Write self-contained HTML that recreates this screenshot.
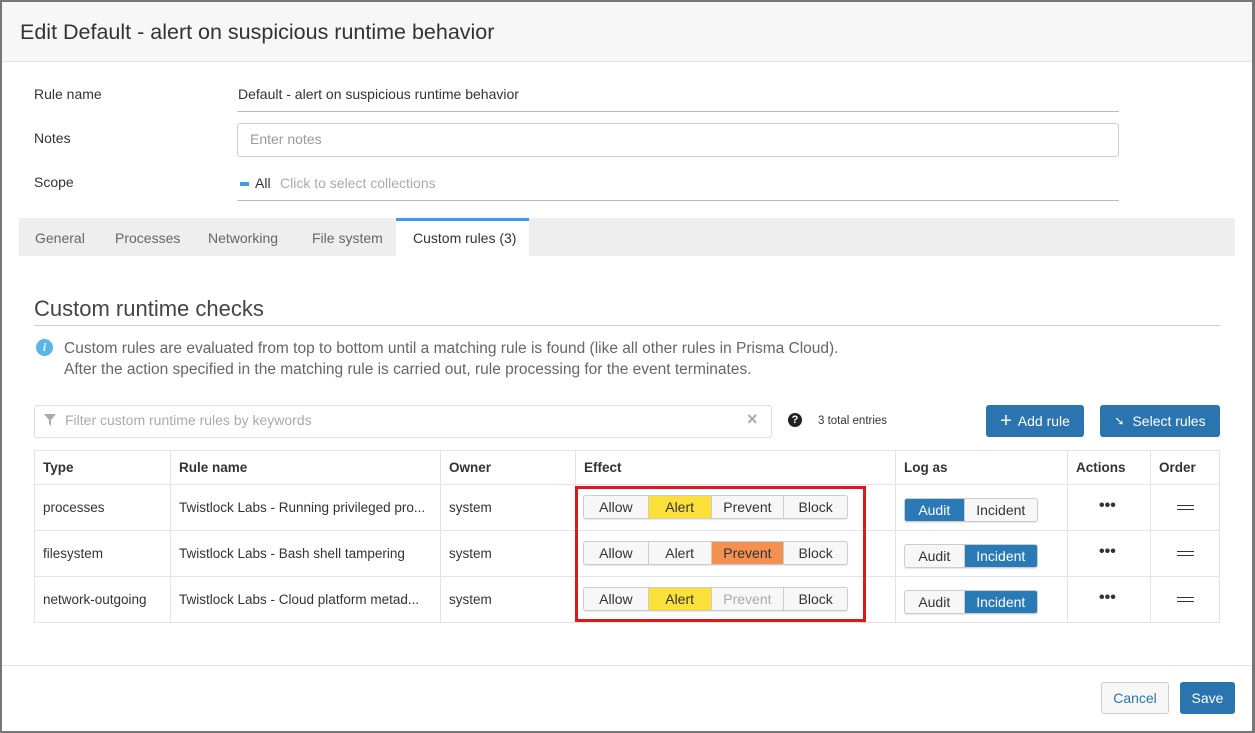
<!DOCTYPE html><html><head><style>
*{box-sizing:border-box;margin:0;padding:0}
body{width:1255px;height:733px;overflow:hidden;background:#fff;font-family:"Liberation Sans",sans-serif;color:#333;position:relative}
.a{position:absolute}
.dlg{left:0;top:0;width:1255px;height:733px;border:2px solid #777;border-right-width:3px}
.lbl{font-size:14px;color:#333}
.seg{position:absolute;display:flex;height:24px;border:1px solid #ccc;border-radius:3px;overflow:hidden;font-size:14px;background:#f7f7f7;box-shadow:0 1px 1px rgba(0,0,0,.1)}
.seg div{display:flex;align-items:center;justify-content:center;border-right:1px solid #ccc;color:#333}
.seg div:last-child{border-right:none}
.y{background:#fce03a}.o{background:#f49150}.b{background:#2a7ab8;color:#fff!important}
.dis{color:#aaa!important}
.btn{position:absolute;background:#2a74b0;color:#fff;font-size:14px;border-radius:3px;display:flex;align-items:center;justify-content:center}
td,th{border:1px solid #e3e3e3;font-size:13.5px;text-align:left;padding:0 8px;color:#333;white-space:nowrap;overflow:hidden}
th{height:34px;font-weight:bold;font-size:13.5px}
td{height:46px}
</style></head><body>
<div class="a dlg"></div>
<div class="a" style="left:2px;top:2px;width:1250px;height:60px;background:#f7f7f7;border-bottom:1px solid #e3e3e3"></div>
<div class="a" style="left:20px;top:20px;font-size:21.5px;color:#333">Edit Default - alert on suspicious runtime behavior</div>
<div class="a lbl" style="left:34px;top:86px">Rule name</div>
<div class="a lbl" style="left:238px;top:86px">Default - alert on suspicious runtime behavior</div>
<div class="a" style="left:237px;top:111px;width:882px;height:1px;background:#bbb"></div>
<div class="a lbl" style="left:34px;top:130px">Notes</div>
<div class="a" style="left:237px;top:123px;width:882px;height:34px;border:1px solid #ccc;border-radius:3px"></div>
<div class="a" style="left:250px;top:131px;font-size:14px;color:#999">Enter notes</div>
<div class="a lbl" style="left:34px;top:174px">Scope</div>
<div class="a" style="left:240px;top:182px;width:9px;height:4px;background:#3a9be8"></div>
<div class="a lbl" style="left:255px;top:175px">All</div>
<div class="a" style="left:280px;top:175px;font-size:14px;color:#aaa">Click to select collections</div>
<div class="a" style="left:237px;top:200px;width:882px;height:1px;background:#bbb"></div>
<div class="a" style="left:19px;top:218px;width:1216px;height:38px;background:#eee"></div>
<div class="a" style="left:396px;top:218px;width:133px;height:38px;background:#fff;border-top:3px solid #3a9be8"></div>
<div class="a" style="left:35px;top:230px;font-size:14px;color:#666">General</div>
<div class="a" style="left:115px;top:230px;font-size:14px;color:#666">Processes</div>
<div class="a" style="left:208px;top:230px;font-size:14px;color:#666">Networking</div>
<div class="a" style="left:312px;top:230px;font-size:14px;color:#666">File system</div>
<div class="a" style="left:413px;top:230px;font-size:14px;color:#333">Custom rules (3)</div>
<div class="a" style="left:34px;top:296px;font-size:22px;color:#444;font-weight:300">Custom runtime checks</div>
<div class="a" style="left:34px;top:325px;width:1186px;height:1px;background:#ccc"></div>
<div class="a" style="left:36px;top:339px;width:17px;height:17px;border-radius:50%;background:#5bb6e8;color:#fff;font:italic bold 12px 'Liberation Serif',serif;text-align:center;line-height:17px">i</div>
<div class="a" style="left:64px;top:338px;font-size:15.5px;color:#666;line-height:21px;white-space:nowrap">Custom rules are evaluated from top to bottom until a matching rule is found (like all other rules in Prisma Cloud).<br>After the action specified in the matching rule is carried out, rule processing for the event terminates.</div>
<div class="a" style="left:34px;top:405px;width:738px;height:33px;border:1px solid #ddd;border-radius:3px"></div>
<svg class="a" style="left:44px;top:414px" width="12" height="12" viewBox="0 0 12 12"><path d="M0 0H12L7 6V12L5 10V6Z" fill="#aaa"/></svg>
<div class="a" style="left:65px;top:412px;font-size:14px;color:#aaa">Filter custom runtime rules by keywords</div>
<div class="a" style="left:747px;top:409px;font-size:18px;color:#aaa;font-weight:bold">×</div>
<div class="a" style="left:788px;top:413px;width:14px;height:14px;border-radius:50%;background:#222;color:#fff;font-size:11px;font-weight:bold;text-align:center;line-height:14px">?</div>
<div class="a" style="left:818px;top:415px;font-size:11.5px;color:#333">3 total entries</div>
<div class="btn" style="left:986px;top:405px;width:98px;height:32px"><span style="font-size:20px;margin-right:6px;font-weight:300">+</span>Add rule</div>
<div class="btn" style="left:1100px;top:405px;width:120px;height:32px"><span style="font-size:12px;margin-right:8px">➘</span>Select rules</div>
<table class="a" style="left:34px;top:450px;width:1186px;border-collapse:collapse;table-layout:fixed">
<tr><th style="width:136px">Type</th><th style="width:270px">Rule name</th><th style="width:135px">Owner</th><th style="width:320px">Effect</th><th style="width:172px">Log as</th><th style="width:83px">Actions</th><th>Order</th></tr>
<tr><td>processes</td><td>Twistlock Labs - Running privileged pro...</td><td>system</td><td></td><td></td><td></td><td></td></tr>
<tr><td>filesystem</td><td>Twistlock Labs - Bash shell tampering</td><td>system</td><td></td><td></td><td></td><td></td></tr>
<tr><td>network-outgoing</td><td>Twistlock Labs - Cloud platform metad...</td><td>system</td><td></td><td></td><td></td><td></td></tr>
</table>
<div class="a" style="left:575px;top:486px;width:291px;height:136px;border:3px solid #e0161e"></div>
<div class="seg" style="left:583px;top:495px;width:265px"><div style="width:65px">Allow</div><div class="y" style="width:63px">Alert</div><div style="width:73px">Prevent</div><div style="width:63px">Block</div></div>
<div class="seg" style="left:583px;top:541px;width:265px"><div style="width:65px">Allow</div><div style="width:63px">Alert</div><div class="o" style="width:73px">Prevent</div><div style="width:63px">Block</div></div>
<div class="seg" style="left:583px;top:587px;width:265px"><div style="width:65px">Allow</div><div class="y" style="width:63px">Alert</div><div class="dis" style="width:73px">Prevent</div><div style="width:63px">Block</div></div>
<div class="seg" style="left:904px;top:498px;width:134px"><div class="b" style="width:60px">Audit</div><div style="width:73px">Incident</div></div>
<div class="seg" style="left:904px;top:544px;width:134px"><div style="width:60px">Audit</div><div class="b" style="width:73px">Incident</div></div>
<div class="seg" style="left:904px;top:590px;width:134px"><div style="width:60px">Audit</div><div class="b" style="width:73px">Incident</div></div>
<div class="a" style="left:1099px;top:497px;font-size:16px;font-weight:bold">•••</div>
<div class="a" style="left:1099px;top:543px;font-size:16px;font-weight:bold">•••</div>
<div class="a" style="left:1099px;top:589px;font-size:16px;font-weight:bold">•••</div>
<div class="a" style="left:1177px;top:505px;width:17px;height:5px;border-top:1px solid #333;border-bottom:1px solid #333"></div>
<div class="a" style="left:1177px;top:551px;width:17px;height:5px;border-top:1px solid #333;border-bottom:1px solid #333"></div>
<div class="a" style="left:1177px;top:597px;width:17px;height:5px;border-top:1px solid #333;border-bottom:1px solid #333"></div>
<div class="a" style="left:2px;top:665px;width:1250px;height:1px;background:#e3e3e3"></div>
<div class="a" style="left:1101px;top:682px;width:68px;height:32px;border:1px solid #ccc;border-radius:3px;background:#f7f7f7;font-size:14px;color:#2a74b0;display:flex;align-items:center;justify-content:center">Cancel</div>
<div class="btn" style="left:1180px;top:682px;width:55px;height:32px">Save</div>
</body></html>
